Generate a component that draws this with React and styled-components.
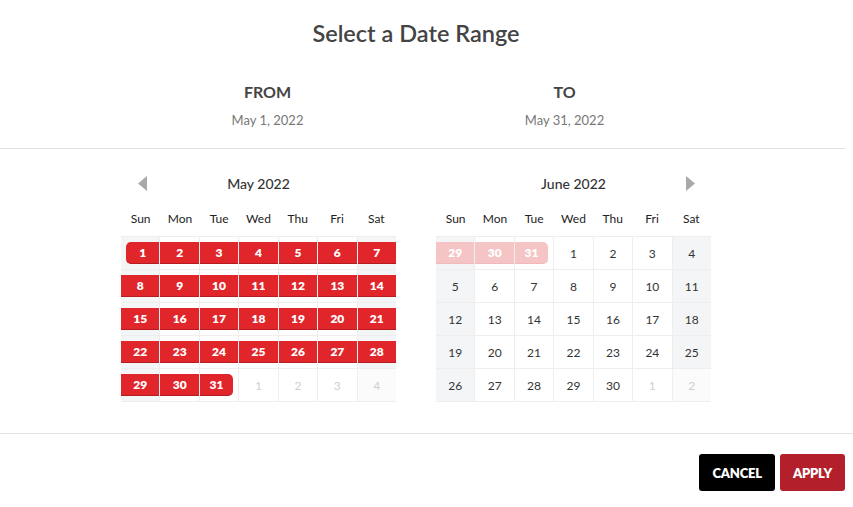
import React from "react";
import styled, { createGlobalStyle } from "styled-components";

const Global = createGlobalStyle`
  html, body { margin: 0; padding: 0; background: #fff; }
  body { font-family: "Lato", "Open Sans", sans-serif; color: #333; }
`;

const Page = styled.div`
  width: 853px;
  display: flex;
  flex-direction: column;
`;

const Top = styled.div`
  width: 832px;
  display: flex;
  flex-direction: column;
  align-items: center;
  padding-top: 18px;
  padding-bottom: 19px;
`;

const Title = styled.h1`
  margin: 0;
  font-size: 23.5px;
  line-height: 30px;
  font-weight: 600;
  color: #444;
`;

const RangeRow = styled.div`
  margin-top: 34px;
  display: flex;
`;

const RangeCol = styled.div`
  width: 297px;
  display: flex;
  flex-direction: column;
  align-items: center;
`;

const RangeLabel = styled.div`
  font-size: 16px;
  line-height: 20px;
  font-weight: 700;
  color: #444;
`;

const RangeValue = styled.div`
  margin-top: 9px;
  font-size: 13px;
  line-height: 18px;
  color: #777;
`;

const Divider = styled.hr`
  margin: 0;
  border: 0;
  height: 1px;
  background: #e3e3e3;
  width: ${(p) => p.$width || "100%"};
`;

const Calendars = styled.div`
  width: 832px;
  display: flex;
  justify-content: center;
  gap: 40px;
  padding-top: 20px;
  padding-bottom: 31px;
`;

const Month = styled.div`
  width: 275px;
  display: flex;
  flex-direction: column;
`;

const MonthHeader = styled.div`
  height: 29px;
  padding: 0 16px;
  display: flex;
  align-items: center;
  justify-content: space-between;
`;

const MonthName = styled.div`
  font-size: 14px;
  font-weight: 500;
  color: #333;
`;

const ArrowBtn = styled.div`
  width: 10px;
  height: 16px;
  display: flex;
  align-items: center;
  justify-content: center;
  visibility: ${(p) => (p.$hidden ? "hidden" : "visible")};
`;

const DayNames = styled.div`
  height: 38px;
  display: grid;
  grid-template-columns: repeat(7, 1fr);
  align-items: center;
`;

const DayName = styled.div`
  text-align: center;
  font-size: 12px;
  color: #222;
  padding-top: 2px;
`;

const Grid = styled.div`
  display: grid;
  grid-template-columns: repeat(7, 1fr);
  grid-auto-rows: 32px;
  gap: 1px;
  padding: 1px 0;
  background: #eeeeef;
`;

const Cell = styled.div`
  display: flex;
  align-items: center;
  background: ${(p) =>
    p.$outside ? (p.$weekend ? "#fbfbfb" : "#fff") : p.$weekend ? "#f4f5f7" : "#fff"};
  font-size: 12px;
  color: ${(p) => (p.$outside ? "#cfcfcf" : "#333")};
`;

const Plain = styled.span`
  flex: 1;
  text-align: center;
`;

const Band = styled.span`
  flex: 1;
  height: 22px;
  box-sizing: border-box;
  display: flex;
  align-items: center;
  justify-content: center;
  font-weight: 800;
  font-size: 12px;
  color: #fff;
  background: ${(p) => (p.$faded ? "#f5c4c5" : "#e1262b")};
  border-bottom: 1px solid ${(p) => (p.$faded ? "#f1b9ba" : "#b51c20")};
  margin-left: ${(p) => (p.$start ? "5px" : "0")};
  margin-right: ${(p) => (p.$end ? "5px" : "0")};
  border-radius: ${(p) =>
    p.$start ? "5px 0 0 5px" : p.$end ? "0 5px 5px 0" : "0"};
`;

const Footer = styled.div`
  display: flex;
  justify-content: flex-end;
  gap: 5px;
  padding: 20px 8px 16px 0;
`;

const Button = styled.button`
  height: 37px;
  padding: 0 ${(p) => p.$px || 12}px;
  border: 0;
  border-radius: 3px;
  background: ${(p) => p.$bg};
  color: #fff;
  font-family: "Lato", sans-serif;
  font-weight: 800;
  font-size: 13px;
  letter-spacing: -0.2px;
`;

const Arrow = ({ dir }) => (
  <svg width="9" height="15" viewBox="0 0 9 15">
    {dir === "left" ? (
      <polygon points="9,0 9,15 0,7.5" fill="#a9a9a9" />
    ) : (
      <polygon points="0,0 0,15 9,7.5" fill="#a9a9a9" />
    )}
  </svg>
);

const DAYS = ["Sun", "Mon", "Tue", "Wed", "Thu", "Fri", "Sat"];

const may = [];
for (let d = 1; d <= 31; d++)
  may.push({ n: d, sel: true, start: d === 1, end: d === 31 });
for (let d = 1; d <= 4; d++) may.push({ n: d, outside: true });

const june = [];
for (let d = 29; d <= 31; d++)
  june.push({ n: d, outside: true, faded: true, end: d === 31 });
for (let d = 1; d <= 30; d++) june.push({ n: d });
for (let d = 1; d <= 2; d++) june.push({ n: d, outside: true });

const Calendar = ({ name, cells, left, right }) => (
  <Month>
    <MonthHeader>
      <ArrowBtn $hidden={!left}>
        <Arrow dir="left" />
      </ArrowBtn>
      <MonthName>{name}</MonthName>
      <ArrowBtn $hidden={!right}>
        <Arrow dir="right" />
      </ArrowBtn>
    </MonthHeader>
    <DayNames>
      {DAYS.map((d) => (
        <DayName key={d}>{d}</DayName>
      ))}
    </DayNames>
    <Grid>
      {cells.map((c, i) => {
        const weekend = i % 7 === 0 || i % 7 === 6;
        return (
          <Cell key={i} $weekend={weekend} $outside={c.outside && !c.faded}>
            {c.sel || c.faded ? (
              <Band $faded={c.faded} $start={c.start} $end={c.end}>
                {c.n}
              </Band>
            ) : (
              <Plain>{c.n}</Plain>
            )}
          </Cell>
        );
      })}
    </Grid>
  </Month>
);

export default function App() {
  return (
    <Page>
      <Global />
      <Top>
        <Title>Select a Date Range</Title>
        <RangeRow>
          <RangeCol>
            <RangeLabel>FROM</RangeLabel>
            <RangeValue>May 1, 2022</RangeValue>
          </RangeCol>
          <RangeCol>
            <RangeLabel>TO</RangeLabel>
            <RangeValue>May 31, 2022</RangeValue>
          </RangeCol>
        </RangeRow>
      </Top>
      <Divider $width="845px" />
      <Calendars>
        <Calendar name="May 2022" cells={may} left />
        <Calendar name="June 2022" cells={june} right />
      </Calendars>
      <Divider />
      <Footer>
        <Button $bg="#000" $px={13}>CANCEL</Button>
        <Button $bg="#b31f2b" $px={13}>APPLY</Button>
      </Footer>
    </Page>
  );
}
